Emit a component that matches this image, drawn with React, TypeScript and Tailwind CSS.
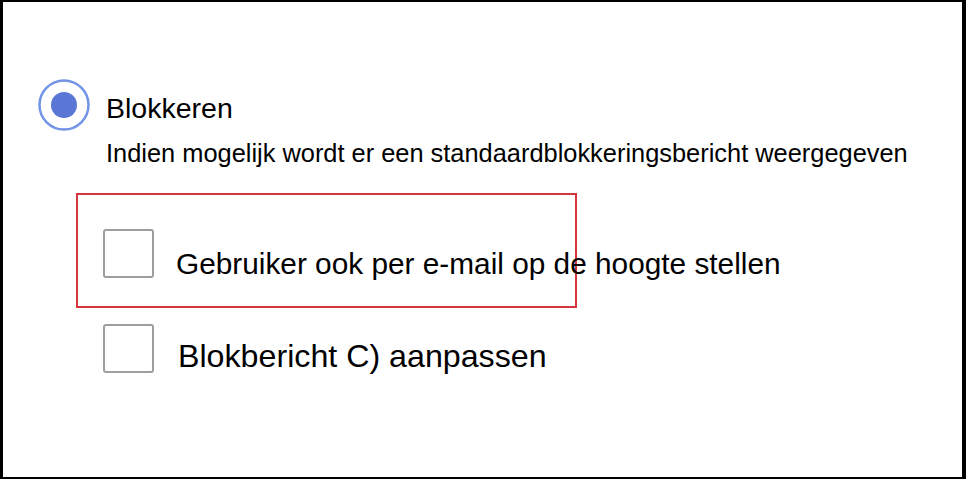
export default function App() {
  return (
    <div
      className="w-[966px] h-[479px] bg-white border-black border-t-2 border-l-[3px] border-r-4 border-b-2 overflow-hidden text-black"
      style={{ fontFamily: '"Liberation Sans", Arial, sans-serif' }}
    >
      <div className="pt-[77px]">
        {/* radio option */}
        <div className="flex items-start ml-[35px]">
          <svg width="52" height="52" viewBox="0 0 52 52" className="shrink-0">
            <circle cx="26" cy="26" r="24.5" fill="white" stroke="#7393e6" strokeWidth="2.5" />
            <circle cx="26" cy="26" r="13" fill="#5a77d6" />
          </svg>
          <span className="ml-4 mt-[15px] text-[28.5px] leading-none whitespace-nowrap">Blokkeren</span>
        </div>
        <p className="ml-[103px] mt-[10px] text-[25.4px] leading-none whitespace-nowrap">
          Indien mogelijk wordt er een standaardblokkeringsbericht weergegeven
        </p>

        {/* highlighted option */}
        <div className="ml-[73px] mt-[27px] w-[501px] h-[115px] border-2 border-[#d6353e]">
          <div className="flex items-start ml-[25px] mt-[34px]">
            <div className="w-[51px] h-[49px] shrink-0 rounded-[3px] border-[2.5px] border-[#9e9e9e]" />
            <span className="ml-[22px] mt-[20px] text-[29.8px] leading-none whitespace-nowrap">
              Gebruiker ook per e-mail op de hoogte stellen
            </span>
          </div>
        </div>

        <div className="flex items-start ml-[100px] mt-[16px]">
          <div className="w-[51px] h-[49px] shrink-0 rounded-[3px] border-[2.5px] border-[#9e9e9e]" />
          <span className="ml-[24px] mt-[16px] text-[32.2px] leading-none whitespace-nowrap">
            Blokbericht C) aanpassen
          </span>
        </div>
      </div>
    </div>
  )
}
